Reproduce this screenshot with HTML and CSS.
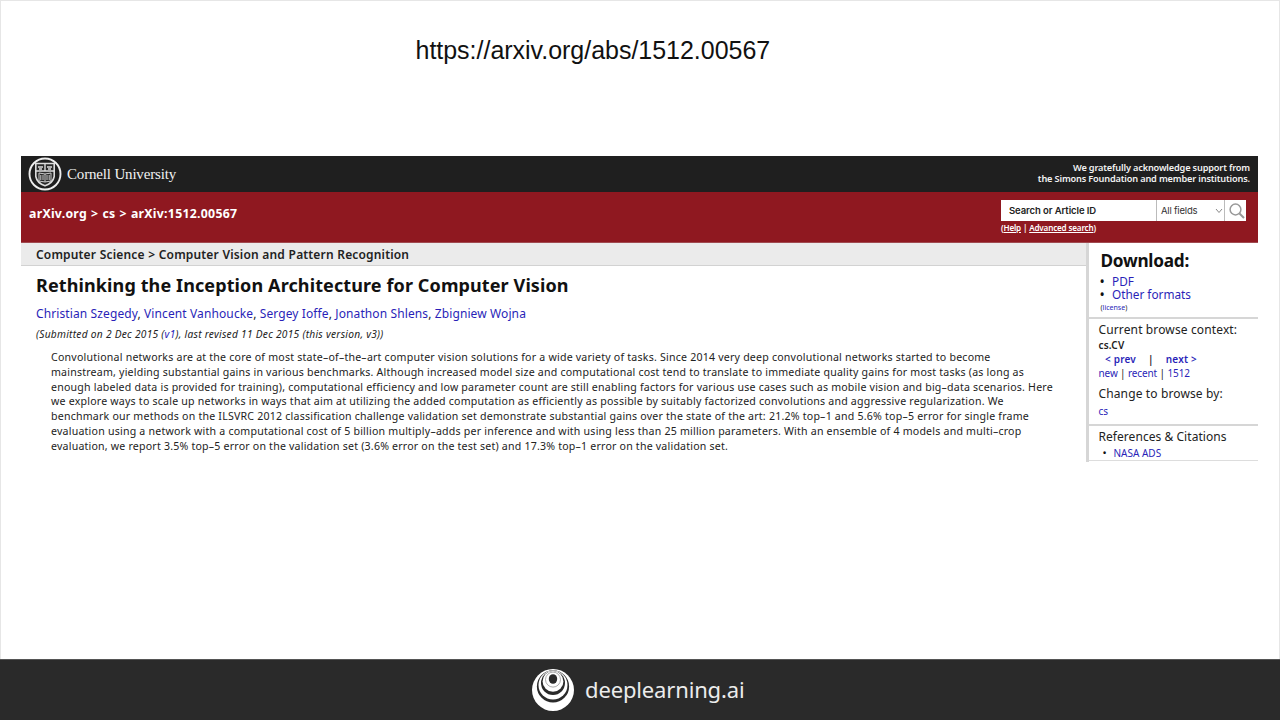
FILE: index.html
```html
<!DOCTYPE html>
<html lang="en"><head><meta charset="utf-8"><title>arXiv 1512.00567</title>
<link rel="stylesheet" href="styles.css"></head>
<body>
<main class="slide">
<div class="url">https://arxiv.org/abs/1512.00567</div>
<section class="paper">
<header class="cornell">
<div class="brand">
<svg class="seal" viewBox="0 0 34 34"><circle cx="17" cy="17" r="15.5" fill="none" stroke="#eee" stroke-width="1.9"/><path d="M7.8 6.5h18.4v13q-1.2 6.5-9.2 9.3q-8-2.8-9.2-9.3z" fill="#292929" stroke="#ddd" stroke-width="1.6"/><path d="M8 14h18M17 7v7M10 10h5M19 10h5M11 12h3M20 12h3" stroke="#ddd" stroke-width="1.4"/><path d="M11 16l6 1 6-1v8l-6 1-6-1zM17 17v8M12.8 18v5M15 18v5M19 18v5M21.2 18v5" fill="none" stroke="#ccc" stroke-width="1"/></svg>
<span class="brand-name">Cornell University</span></div>
<div class="support"><div>We gratefully acknowledge support from</div><div>the Simons Foundation and member institutions.</div></div>
</header>
<div class="banner">
<div class="crumbs">arXiv.org &gt; cs &gt; arXiv:1512.00567</div>
<div class="search"><div class="controls"><div class="field">Search or Article ID</div><div class="select"><span>All fields</span><svg width="8" height="6" viewBox="0 0 8 6"><path d="M1 1l3 3.5L7 1" fill="none" stroke="#888"/></svg></div><div class="go"><svg width="18" height="18" viewBox="0 0 18 18"><circle cx="7.5" cy="7.5" r="5.4" fill="none" stroke="#999" stroke-width="1.5"/><path d="M11.5 11.5L16 16" stroke="#999" stroke-width="2"/></svg></div></div>
<div class="help">(<u>Help</u> | <u>Advanced search</u>)</div></div>
</div>
<div class="columns">
<article class="content">
<div class="subject">Computer Science &gt; Computer Vision and Pattern Recognition</div>
<h1 class="title">Rethinking the Inception Architecture for Computer Vision</h1>
<div class="authors"><a>Christian Szegedy</a>, <a>Vincent Vanhoucke</a>, <a>Sergey Ioffe</a>, <a>Jonathon Shlens</a>, <a>Zbigniew Wojna</a></div>
<div class="dates">(Submitted on 2 Dec 2015 (<a>v1</a>), last revised 11 Dec 2015 (this version, v3))</div>
<div class="abstract">
<div>Convolutional networks are at the core of most state–of–the–art computer vision solutions for a wide variety of tasks. Since 2014 very deep convolutional networks started to become</div>
<div class="tight">mainstream, yielding substantial gains in various benchmarks. Although increased model size and computational cost tend to translate to immediate quality gains for most tasks (as long as</div>
<div class="tight">enough labeled data is provided for training), computational efficiency and low parameter count are still enabling factors for various use cases such as mobile vision and big–data scenarios. Here</div>
<div>we explore ways to scale up networks in ways that aim at utilizing the added computation as efficiently as possible by suitably factorized convolutions and aggressive regularization. We</div>
<div>benchmark our methods on the ILSVRC 2012 classification challenge validation set demonstrate substantial gains over the state of the art: 21.2% top–1 and 5.6% top–5 error for single frame</div>
<div>evaluation using a network with a computational cost of 5 billion multiply–adds per inference and with using less than 25 million parameters. With an ensemble of 4 models and multi–crop</div>
<div class="tight">evaluation, we report 3.5% top–5 error on the validation set (3.6% error on the test set) and 17.3% top–1 error on the validation set.</div>
</div>
</article>
<aside class="side">
<div class="download"><h2>Download:</h2><ul><li><a>PDF</a></li><li><a>Other formats</a></li></ul><div class="license">(<a>license</a>)</div></div>
<div class="browse"><div class="label">Current browse context:</div><div class="current">cs.CV</div><div class="prevnext"><a>&lt; prev</a><span>|</span><a>next &gt;</a></div><div class="list"><a>new</a> | <a>recent</a> | <a>1512</a></div><div class="label change">Change to browse by:</div><div class="cs"><a>cs</a></div></div>
<div class="refs"><div class="label">References &amp; Citations</div><ul><li><a>NASA ADS</a></li></ul></div>
</aside>
</div>
</section>
<footer class="footer"><svg class="logo" viewBox="0 0 42 42"><circle cx="21" cy="21" r="21" fill="#fff"/><circle cx="21" cy="17.4" r="16.1" fill="#2a2a2a"/><circle cx="21" cy="16" r="14.5" fill="#fff"/><circle cx="21" cy="13.9" r="12" fill="#2a2a2a"/><circle cx="21" cy="12.4" r="10.4" fill="#fff"/><circle cx="21" cy="10.6" r="7.5" fill="none" stroke="#888" stroke-width=".7"/><ellipse cx="21" cy="10" rx="4.2" ry="4.8" fill="#2a2a2a"/></svg><span class="dl">deeplearning.ai</span></footer>
</main>
</body></html>
```
FILE: styles.css
```css
* { box-sizing: border-box; }
body { margin: 0; font-family: "Noto Sans", sans-serif; color: #222; }
.slide { width: 1280px; height: 720px; background: #fff; box-shadow: inset 1px 1px #e6e6e6, inset -1px 0 #e6e6e6; padding-top: 1px; display: flex; flex-direction: column; overflow: hidden; white-space: nowrap; }
a { color: #2a1fb8; }
ul { list-style: none; margin: 0; padding: 0; }
.url { height: 155px; padding: 34px 0 0 415.5px; font: 25px/30px "Liberation Sans", sans-serif; letter-spacing: -.02px; color: #111; }
.paper { width: 1237px; margin-left: 21px; height: 503px; }
.cornell { height: 36px; background: #1f1f1f; display: flex; justify-content: space-between; color: #f2f2f2; }
.brand { display: flex; align-items: center; gap: 5px; padding-left: 7px; }
.seal { width: 34px; height: 34px; }
.brand-name { font: 15px/20px "Liberation Serif", serif; letter-spacing: -.17px; }
.support { text-align: right; font-size: 9.2px; line-height: 11px; font-weight: 600; letter-spacing: -.165px; padding: 6px 8px 0 0; }
.banner { height: 51px; background: #8f1820; color: #fff; display: flex; justify-content: space-between; border-bottom: 1px solid #a04a50; }
.crumbs { padding: 13px 0 0 8px; font-size: 12.3px; line-height: 18px; font-weight: 700; letter-spacing: .27px; word-spacing: .6px; }
.search { width: 257px; padding-top: 8px; }
.controls { display: flex; width: 245px; height: 21px; background: #fff; }
.field { width: 155px; flex: none; padding-left: 8px; font: 600 9.5px/21px Inter, sans-serif; letter-spacing: -.09px; color: #222; }
.select { width: 68px; flex: none; border-left: 1px solid #bbb; padding: 0 1px 0 4px; display: flex; justify-content: space-between; align-items: center; font: 9.5px/21px Inter, sans-serif; letter-spacing: -.2px; color: #333; }
.go { width: 22px; flex: none; border-left: 1px solid #bbb; padding: 2px 0 2px 3px; }
.help { font-size: 8.1px; line-height: 13px; font-weight: 600; letter-spacing: -.17px; }
.columns { display: flex; height: 219px; }
.content { width: 1065px; }
.subject { height: 23px; background: #ebebeb; border-bottom: 1px solid #d2d2d2; padding-left: 15px; font-size: 12px; line-height: 23px; font-weight: 600; letter-spacing: .16px; word-spacing: .3px; }
.title { margin: 0; padding: 7px 0 0 15px; font-size: 18px; line-height: 24px; font-weight: 700; letter-spacing: .11px; color: #111; }
.authors { padding: 8px 0 0 15px; font-size: 12px; line-height: 18px; letter-spacing: .108px; }
.dates { padding: 4px 0 0 15px; font-size: 10.2px; line-height: 15px; font-style: italic; letter-spacing: .27px; }
.abstract { padding: 8px 0 0 30px; font-size: 10.6px; line-height: 14.75px; letter-spacing: .212px; }
.tight { letter-spacing: .202px; }
.side { width: 172px; border-left: 3px solid #d6d6d6; }
.download { height: 76px; border-bottom: 2px solid #d6d6d6; padding: 7px 0 0 11.5px; }
.side h2 { margin: 0; font-size: 17.2px; line-height: 22px; font-weight: 700; letter-spacing: -.25px; color: #111; }
.download li { font-size: 11.8px; line-height: 13.3px; display: flex; }
li::before { content: "•"; width: 11px; color: #111; font-size: 14px; }
.download li::before { margin-left: -1px; width: 12.5px; }
.download ul { padding-top: 3px; }
.license { font-size: 7px; line-height: 12px; }
.browse { height: 107px; border-bottom: 2px solid #d6d6d6; padding: 2px 0 0 9.5px; font-size: 10px; }
.label { font-size: 12px; line-height: 18px; letter-spacing: .13px; }
.current { font-weight: 600; line-height: 13px; letter-spacing: .2px; }
.prevnext { display: flex; padding-left: 6.5px; line-height: 15px; font-weight: 600; gap: 12px; letter-spacing: .2px; }
.list { line-height: 13px; letter-spacing: -.12px; }
.change { padding-top: 5px; }
.cs { line-height: 13px; padding-top: 2px; }
.refs { padding: 2px 0 0 9.5px; height: 35px; border-bottom: 1px solid #ddd; font-size: 10px; }
.refs .label { line-height: 17px; letter-spacing: .05px; }
.refs li { display: flex; padding-left: 4px; line-height: 16px; }
.refs li::before { font-size: 11px; }
.footer { height: 61px; background: #2a2a2a; border-top: 1px solid #555; display: flex; padding-left: 532px; gap: 11px; align-items: center; color: #ececec; }
.logo { width: 42px; height: 42px; }
.dl { font-size: 22px; letter-spacing: -.15px; padding-bottom: 3px; }
```
